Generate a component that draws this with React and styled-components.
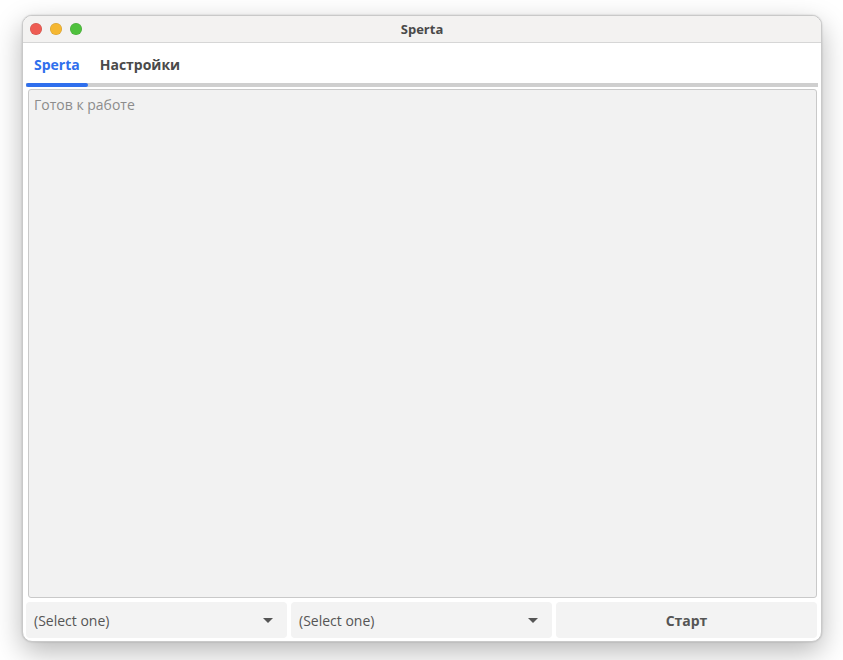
import React from "react"
import styled, { createGlobalStyle } from "styled-components"

const GlobalStyle = createGlobalStyle`
  html, body {
    margin: 0;
    padding: 0;
    background: #ffffff;
    font-family: "Open Sans", "Noto Sans", sans-serif;
  }
`

const Page = styled.div`
  width: 843px;
  height: 660px;
  padding: 15px 0 0 22px;
  box-sizing: border-box;
`

const Window = styled.div`
  width: 800px;
  height: 627px;
  border-radius: 10px;
  background: #ffffff;
  border: 1px solid #c9c9c9;
  box-sizing: border-box;
  box-shadow: 0 10px 28px rgba(0, 0, 0, 0.28), 0 0 2px rgba(0, 0, 0, 0.2);
  display: flex;
  flex-direction: column;
  overflow: hidden;
`

const TitleBar = styled.div`
  height: 26px;
  flex-shrink: 0;
  background: #f3f2f1;
  border-bottom: 1px solid #d6d6d6;
  position: relative;
  display: flex;
  align-items: center;
  justify-content: center;
`

const Lights = styled.div`
  position: absolute;
  left: 7px;
  top: 7px;
  display: flex;
  gap: 8px;
`

const Light = styled.span`
  width: 12px;
  height: 12px;
  border-radius: 50%;
  background: ${({ color }) => color};
  box-shadow: inset 0 0 0 0.5px rgba(0, 0, 0, 0.15);
`

const Title = styled.div`
  font-size: 13px;
  font-weight: 700;
  color: #4a4a4a;
`

const Body = styled.div`
  flex: 1;
  display: flex;
  flex-direction: column;
  padding: 0 3px 3px 3px;
  min-height: 0;
`

const Tabs = styled.div`
  display: flex;
  height: 40px;
  border-bottom: 4px solid #cfcfcf;
  position: relative;
`

const Tab = styled.div`
  position: relative;
  padding: 12px 8px 0 8px;
  font-size: 14px;
  font-weight: 700;
  color: ${({ active }) => (active ? "#2f6fed" : "#4a4a4a")};
  margin-right: 4px;

  &::after {
    content: "";
    display: ${({ active }) => (active ? "block" : "none")};
    position: absolute;
    left: 0;
    right: 0;
    bottom: -4px;
    height: 4px;
    border-radius: 2px;
    background: #2f6fed;
  }
`

const Output = styled.div`
  flex: 1;
  margin: 2px 1px 4px 2px;
  background: #f2f2f2;
  border: 1px solid #c9c9c9;
  border-radius: 3px;
  padding: 5px 5px;
  font-size: 14px;
  color: #8c8c8c;
`

const Controls = styled.div`
  display: grid;
  grid-template-columns: 1fr 1fr 1fr;
  gap: 4px;
  height: 36px;
  padding-right: 1px;
`

const Select = styled.div`
  background: #f3f3f3;
  border-radius: 4px;
  display: flex;
  align-items: center;
  justify-content: space-between;
  padding: 0 14px 0 8px;
  font-size: 14px;
  color: #555555;
`

const Caret = styled.span`
  width: 0;
  height: 0;
  border-left: 5px solid transparent;
  border-right: 5px solid transparent;
  border-top: 5px solid #555555;
`

const Button = styled.div`
  background: #f3f3f3;
  border-radius: 4px;
  display: flex;
  align-items: center;
  justify-content: center;
  font-size: 14px;
  font-weight: 700;
  color: #555555;
`

export default function App() {
  return (
    <>
      <GlobalStyle />
      <Page>
        <Window>
          <TitleBar>
            <Lights>
              <Light color="#ee5c53" />
              <Light color="#f5b731" />
              <Light color="#4fc13d" />
            </Lights>
            <Title>Sperta</Title>
          </TitleBar>
          <Body>
            <Tabs>
              <Tab active>Sperta</Tab>
              <Tab>Настройки</Tab>
            </Tabs>
            <Output>Готов к работе</Output>
            <Controls>
              <Select>
                (Select one)
                <Caret />
              </Select>
              <Select>
                (Select one)
                <Caret />
              </Select>
              <Button>Старт</Button>
            </Controls>
          </Body>
        </Window>
      </Page>
    </>
  )
}
